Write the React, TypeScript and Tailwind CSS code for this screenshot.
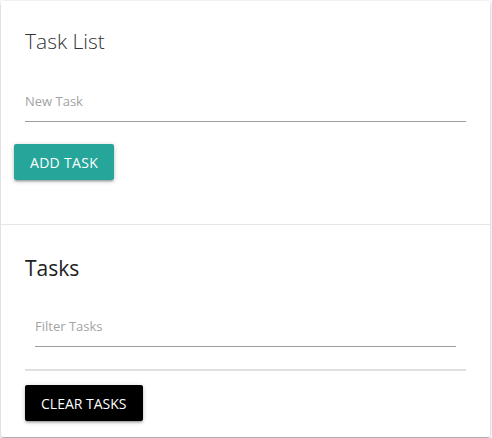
export default function App() {
  return (
    <div className="w-[492px] h-[438px] bg-white pt-px pl-px" style={{ fontFamily: '"Open Sans", "Noto Sans", sans-serif' }}>
      <div className="w-[489px] h-[436px] bg-white rounded-[2px] shadow-[0_2px_2px_0_rgba(0,0,0,0.14),0_3px_1px_-2px_rgba(0,0,0,0.12),0_1px_5px_0_rgba(0,0,0,0.2)] flex flex-col">
        <div className="h-[223px] px-6 pt-6 flex flex-col">
          <div className="h-8 leading-8 text-[21px] font-light text-[#333]">Task List</div>
          <input
            className="mt-6 h-[41px] w-full border-b border-[#9e9e9e] outline-none text-[13px] placeholder:text-[#a3a3a3]"
            placeholder="New Task"
          />
          <div className="mt-[22px] -ml-[11px]">
            <button className="h-9 px-4 bg-[#26a69a] text-white text-[14px] uppercase tracking-[0.3px] rounded-[2px] shadow-[0_2px_2px_0_rgba(0,0,0,0.14),0_3px_1px_-2px_rgba(0,0,0,0.12),0_1px_5px_0_rgba(0,0,0,0.2)]">
              Add Task
            </button>
          </div>
        </div>
        <div className="border-t border-[#e6e6e6] px-6 pt-[27px] flex flex-col">
          <div className="h-8 leading-8 text-[21px] text-[#212121]">Tasks</div>
          <div className="mt-[22px] px-[10px]">
            <input
              className="h-[41px] w-full border-b border-[#9e9e9e] outline-none text-[13px] placeholder:text-[#a3a3a3]"
              placeholder="Filter Tasks"
            />
          </div>
          <ul className="mt-[22px] border-y border-[#e0e0e0]"></ul>
          <div className="mt-[14px]">
            <button className="h-9 px-4 bg-black text-white text-[14px] uppercase rounded-[2px] shadow-[0_2px_2px_0_rgba(0,0,0,0.14),0_3px_1px_-2px_rgba(0,0,0,0.12),0_1px_5px_0_rgba(0,0,0,0.2)]">
              Clear Tasks
            </button>
          </div>
        </div>
      </div>
    </div>
  );
}
